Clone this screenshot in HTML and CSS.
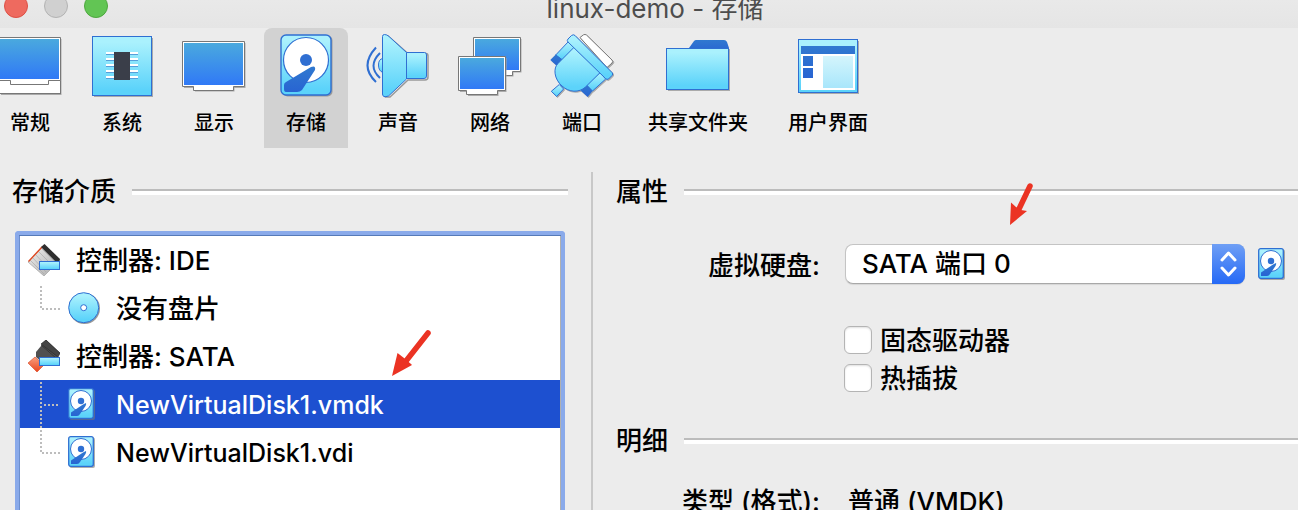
FILE: index.html
```html
<!DOCTYPE html>
<html lang="zh-CN">
<head>
<meta charset="utf-8">
<title>linux-demo - 存储</title>
<link rel="stylesheet" href="styles.css">
</head>
<body>
<svg class="defs" aria-hidden="true">
  <defs>
    <linearGradient id="cyan" x1="0" y1="0" x2="0" y2="1"><stop offset="0.1" stop-color="#aaf1fd"/><stop offset="0.9" stop-color="#5cd3fa"/></linearGradient>
    <linearGradient id="screen" x1="0" y1="0" x2="0" y2="1"><stop offset="0" stop-color="#4aa9de"/><stop offset="1" stop-color="#3079f6"/></linearGradient>
    <linearGradient id="navy" x1="0" y1="0" x2="0" y2="1"><stop offset="0" stop-color="#3079d0"/><stop offset="1" stop-color="#2864d2"/></linearGradient>
    <linearGradient id="pane" x1="0" y1="0" x2="0" y2="1"><stop offset="0" stop-color="#d4f5fc"/><stop offset="1" stop-color="#a8e6fb"/></linearGradient>
    <linearGradient id="board" x1="0" y1="0" x2="1" y2="1"><stop offset="0" stop-color="#f4f4f4"/><stop offset="1" stop-color="#a8a8a8"/></linearGradient>
    <linearGradient id="orange" x1="0" y1="0" x2="0" y2="1"><stop offset="0" stop-color="#f8a080"/><stop offset="1" stop-color="#e8431c"/></linearGradient>
    <symbol id="disk" viewBox="0 0 54 64">
      <rect x="2.500" y="1.500" width="50" height="61" rx="5" fill="#999"/>
      <rect x="1" y="1" width="50" height="60" rx="5" fill="url(#cyan)" stroke="#2f6fd2" stroke-width="1.400"/>
      <circle cx="26" cy="26" r="22.500" fill="#fff" stroke="#2f6fd2" stroke-width="1.200"/>
      <circle cx="26" cy="26" r="6" fill="#2f6fd2"/>
      <path d="M31 33Q36 31 35 36L22 56Q20 58 17 58H6Q4 58 4 55V51Q4 49 6 48Z" fill="url(#navy)"/>
    </symbol>
    <symbol id="disk-small" viewBox="0 0 27 32">
      <rect x="1.500" y="1.500" width="25.500" height="30.500" rx="2" fill="#777" opacity=".6"/>
      <rect x=".7" y=".7" width="24.600" height="29.600" rx="2" fill="url(#cyan)" stroke="#2f6fd2" stroke-width="1.300"/>
      <circle cx="13" cy="13" r="10.500" fill="#fff" stroke="#2f6fd2"/>
      <circle cx="13" cy="13" r="3.200" fill="#2f6fd2"/>
      <path d="M15 16.500L18 15Q18.500 16 17.500 18L12 26Q11 28 9 28H3V24.500Z" fill="url(#navy)"/>
    </symbol>
  </defs>
</svg>

<div class="window">
  <header class="titlebar">
    <div class="lights">
      <button class="light close" aria-label="关闭"></button>
      <button class="light minimize" aria-label="最小化"></button>
      <button class="light zoom" aria-label="缩放"></button>
    </div>
    <h1 class="title">linux-demo - 存储</h1>
  </header>

  <nav class="toolbar">
    <button class="tool">
      <svg class="tool-icon" viewBox="0 0 64 64"><path d="M3 5H63.500V61H3Z" fill="#aaa"/><rect x=".5" y="46.500" width="62" height="13" fill="#fff" stroke="#777"/><path d="M.5 3.500H62.500V46.500H50.500V50.500H12.500V46.500H.5Z" fill="#fff" stroke="#777"/><rect x="2" y="5" width="59" height="40" fill="url(#screen)"/></svg>
      <span>常规</span>
    </button>
    <button class="tool">
      <svg class="tool-icon" viewBox="0 0 64 64"><path d="M4 4H63V63H4Z" fill="#aaa"/><rect x="2.500" y="2.500" width="59" height="59" fill="url(#cyan)" stroke="#2f6fd2"/><path d="M16 20.500H48M16 26.500H48M16 32.500H48M16 38.500H48M16 44.500H48" stroke="#569fda"/><path d="M16 19H48M16 25H48M16 31H48M16 37H48M16 43H48" stroke="#fff" stroke-width="2"/><rect x="24" y="18" width="16" height="28" fill="#3a3e49"/></svg>
      <span>系统</span>
    </button>
    <button class="tool">
      <svg class="tool-icon" viewBox="0 0 64 64"><path d="M2 9H63.500V54H52.500V57.500H13V54H2Z" fill="#aaa"/><path d="M.5 7.500H62.500V52.500H51.500V56.500H11.500V52.500H.5Z" fill="#fff" stroke="#777"/><rect x="2" y="9" width="59" height="42" fill="url(#screen)"/></svg>
      <span>显示</span>
    </button>
    <button class="tool selected" aria-current="page">
      <svg class="tool-icon" viewBox="0 0 64 64"><use href="#disk" x="6" y="0" width="54" height="64"/></svg>
      <span>存储</span>
    </button>
    <button class="tool">
      <svg class="tool-icon" viewBox="0 0 64 64"><g fill="none" stroke="#999" stroke-width="1.500" transform="translate(1 1)"><path d="M18.500 1H21L41 18.500H59Q61 18.500 61 21V42Q61 45 58 45H41L23 62H18.500Z"/></g><path d="M10 13.500Q-7 32 10 48M14 19Q1 32 14 44" fill="none" stroke="#2f6fd2" stroke-width="2"/><path d="M17 24.500Q12.500 25 12.500 31T17 38.500Z" fill="url(#cyan)" stroke="#2f6fd2"/><path d="M40.500 18.500H58.500Q60.500 18.500 60.500 21V42Q60.500 44.500 58 44.500H40.500Z" fill="url(#cyan)" stroke="#2f6fd2"/><path d="M16.500 2.500Q16.500.5 18.500.5Q21 .5 23 2.500L40.500 18.500V45L22.500 62Q16.500 64 16.500 60Z" fill="url(#cyan)" stroke="#2f6fd2"/></svg>
      <span>声音</span>
    </button>
    <button class="tool">
      <svg class="tool-icon" viewBox="0 0 64 64"><path d="M17 5H63.500V38.500H55.500V42.500H17Z" fill="#aaa"/><path d="M15.500 3.500H62.500V37.500H54.500V41.500H15.500Z" fill="#fff" stroke="#777"/><rect x="17" y="5" width="44" height="31" fill="url(#screen)"/><path d="M2 24H48.500V58H40.500V62H10V58H2Z" fill="#aaa"/><path d="M.5 22.500H47.500V56.500H39.500V60.500H8.500V56.500H.5Z" fill="#fff" stroke="#777"/><rect x="2" y="24" width="44" height="31" fill="url(#screen)"/></svg>
      <span>网络</span>
    </button>
    <button class="tool">
      <svg class="tool-icon shaded" viewBox="0 0 64 64"><g stroke-linejoin="round"><path d="M30 3.500L33.500 .8Q35 0 36.500 1L62 26Q63.500 27.500 62 29L57 33.500Z" fill="#fff" stroke="#777"/><path d="M9.300 50.500L13.600 55L6.700 62.500L1.300 57.300Z" fill="url(#cyan)" stroke="#2f6fd2"/><path d="M19 7L25 13L12.500 26L5.700 21Z" fill="url(#cyan)" stroke="#2f6fd2"/><path d="M5.700 20.500L12.300 25.500L6.700 31.700L.3 26Z" fill="url(#navy)"/><path d="M50 38.500L55.700 45L42.500 57L36.500 51Z" fill="url(#cyan)" stroke="#2f6fd2"/><path d="M36.500 50.500L42.500 57L37.700 63L30.700 56.700Z" fill="url(#navy)"/><path d="M24 13.300L50 38.700L35.500 53C29 59 19 58.500 12 52C4 45 3 34 8 29.500Z" fill="url(#cyan)" stroke="#2f6fd2"/><path d="M21.500 1.500Q23.500 0 25 1.500L62 38.500Q63.500 40 62 41.500L58.500 45Q57 46 55.500 44.500L18 8Q16.500 6.500 18 5Z" fill="url(#cyan)" stroke="#2f6fd2"/></g></svg>
      <span>端口</span>
    </button>
    <button class="tool">
      <svg class="tool-icon" viewBox="0 0 64 64"><path d="M2 15H64V57H2Z" fill="#aaa"/><path d="M23 14L28 7Q29 6 30 6H58Q60 6 61 8L63 14V18H23Z" fill="url(#navy)"/><rect x=".5" y="14.500" width="62" height="41" fill="url(#cyan)" stroke="#2f6fd2"/></svg>
      <span>共享文件夹</span>
    </button>
    <button class="tool">
      <svg class="tool-icon" viewBox="0 0 64 64"><path d="M4 7H63V60H4Z" fill="#aaa"/><rect x="2.500" y="5.500" width="59" height="53" fill="url(#cyan)" stroke="#2f6fd2"/><path d="M5 20H59V56H5Z" fill="#fff"/><path d="M5 12H59V20H5ZM7 22H17V32H7ZM7 34H17V44H7Z" fill="url(#navy)"/><rect x="27" y="22" width="30" height="32" fill="url(#pane)"/></svg>
      <span>用户界面</span>
    </button>
  </nav>

  <main class="content">
    <section class="media">
      <h2 class="heading">存储介质</h2>
      <ul class="tree">
        <li class="row">
          <svg class="row-icon" viewBox="0 0 32 32"><path d="M15 2L31 17L16 32L0 18Z" fill="url(#board)" stroke="#999" stroke-width=".6"/><path d="M13 4L27 18M10 7L24 21M7 10L21 25M4 13L18 28M2 16L16 30" stroke="#a5a5a5" stroke-width=".6"/><path d="M14 3L.5 17.500" stroke="#e04a23" stroke-width="1.400"/><path d="M13 3L16.500 0L32 15L31 19L28 18Z" fill="#2e2e2e"/><rect x="11.500" y="17.500" width="20" height="8" fill="url(#cyan)" stroke="#2f6fd2"/></svg>
          <span>控制器: IDE</span>
        </li>
        <li class="row child">
          <svg class="branch" viewBox="0 0 48 48"><path d="M21 2V24M22 25H40"/></svg>
          <svg class="row-icon" viewBox="0 0 32 32"><circle cx="16.500" cy="16.500" r="15.500" fill="#999"/><circle cx="15.700" cy="15.700" r="15" fill="url(#cyan)" stroke="#2f6fd2"/><circle cx="15.700" cy="15.700" r="3" fill="#fff" stroke="#2f6fd2"/></svg>
          <span>没有盘片</span>
        </li>
        <li class="row">
          <svg class="row-icon" viewBox="0 0 32 32"><path d="M7 17L16 25L9 32L0 23Z" fill="url(#orange)" stroke="#d9431c" stroke-width=".6"/><path d="M18 0L32 13L27 20L15 23L8 17V12Z" fill="#505050"/><path d="M18 0L32 13L30 17L13 4ZM13 5L28 18" fill="#444" stroke="#2a2a2a" stroke-width=".7"/><rect x="11.500" y="17.500" width="20" height="8" fill="url(#cyan)" stroke="#2f6fd2"/></svg>
          <span>控制器: SATA</span>
        </li>
        <li class="row child active">
          <svg class="branch" viewBox="0 0 48 48"><path d="M21 2V48M24 25H40"/></svg>
          <svg class="row-icon" viewBox="0 0 32 32"><use href="#disk-small" width="27" height="32"/></svg>
          <span class="file">NewVirtualDisk1.vmdk</span>
        </li>
        <li class="row child">
          <svg class="branch" viewBox="0 0 48 48"><path d="M21 2V24M22 25H40"/></svg>
          <svg class="row-icon" viewBox="0 0 32 32"><use href="#disk-small" width="27" height="32"/></svg>
          <span class="file">NewVirtualDisk1.vdi</span>
        </li>
      </ul>
      <svg class="arrow arrow-media" viewBox="0 0 40 48" aria-hidden="true"><path d="M37 4L15 32" stroke="#eb3323" stroke-width="5.500" stroke-linecap="round"/><path d="M1 47L6.500 24L13 29L20 35L21 36Z" fill="#eb3323"/></svg>
    </section>

    <div class="divider"></div>

    <section class="details">
      <h2 class="heading">属性</h2>
      <form class="form">
        <label class="label" for="port">虚拟硬盘:</label>
        <div class="field">
          <div class="select">
            <select id="port"><option>SATA 端口 0</option></select>
            <svg class="stepper" viewBox="0 0 33 40" aria-hidden="true"><path d="M10 16L16.500 9L23 16M10 24L16.500 31L23 24"/></svg>
          </div>
          <button class="pick" type="button" aria-label="选择虚拟硬盘"><svg class="pick-icon" viewBox="0 0 27 32"><use href="#disk-small" width="27" height="32"/></svg></button>
        </div>
        <div class="checks">
          <label class="check"><input type="checkbox"><span>固态驱动器</span></label>
          <label class="check"><input type="checkbox"><span>热插拔</span></label>
        </div>
      </form>
      <h2 class="heading">明细</h2>
      <dl class="facts">
        <dt>类型 (格式):</dt>
        <dd>普通 (VMDK)</dd>
      </dl>
      <svg class="arrow arrow-port" viewBox="0 0 24 44" aria-hidden="true"><path d="M21 4L10 27" stroke="#eb3323" stroke-width="5.500" stroke-linecap="round"/><path d="M1 43L2 20.500L7 25L12 28L18 29Z" fill="#eb3323"/></svg>
    </section>
  </main>
</div>
</body>
</html>
```

FILE: styles.css
```css
* { box-sizing: border-box; }

body {
  margin: 0;
  overflow: hidden;
  background: #ececec;
  color: #000;
  font: 500 26px/38px Inter, "Noto Sans CJK SC", sans-serif;
}

button { padding: 0; border: 0; background: none; color: inherit; font: inherit; }
h1, h2, ul, dl, dd { margin: 0; padding: 0; font-size: inherit; font-weight: inherit; list-style: none; }
svg { display: block; flex: none; }

.defs { position: absolute; width: 0; height: 0; }
.window { display: flex; flex-direction: column; height: 100vh; }

.titlebar {
  display: grid;
  grid-template-columns: 1fr auto 1fr;
  grid-template-rows: 28px;
  align-items: end;
  flex: none;
  height: 28px;
  padding-left: 12px;
  overflow: hidden;
  background: linear-gradient(#e9e9e9, #e5e5e5);
}
.lights { display: flex; gap: 16px; margin-left: -8px; padding-bottom: 10px; }
.light { width: 24px; height: 24px; border: 1px solid; border-radius: 50%; }
.close { background: #ee6a5f; border-color: #dd4f45; }
.minimize { background: #d0d0d0; border-color: #b3b3b3; }
.zoom { background: #62c554; border-color: #4da73e; }
.title { color: #4d4d4d; font-weight: 400; }

.toolbar { display: flex; flex: none; gap: 8px; margin-left: -12px; font-size: 20px; line-height: 30px; }
.tool {
  display: flex;
  flex-direction: column;
  flex: none;
  align-items: center;
  gap: 10px;
  min-width: 84px;
  padding: 6px 16px 10px;
}
.tool.selected { background: #d2d2d2; border-radius: 8px 8px 0 0; }
.tool-icon { width: 64px; height: 64px; margin: 0 -10px; }
.shaded { filter: drop-shadow(1px 1px 0 #aaa); }

.content {
  display: grid;
  grid-template-columns: minmax(0, 556fr) 2px minmax(0, 682fr);
  flex: 1;
  gap: 23px;
  min-height: 0;
  padding: 24px 0 0 12px;
}
.divider { background: #c8c8c8; }
.media, .details { position: relative; display: flex; flex-direction: column; }

.heading { display: flex; align-items: center; gap: 16px; line-height: 40px; }
.heading::after { flex: 1; height: 4px; border-top: 2px solid #bcbcbc; background: linear-gradient(#fff, #fff); content: ""; }

.tree {
  flex: 1;
  margin: 19px 3px 0;
  border: 4px solid #8aaaea;
  border-bottom: 0;
  border-radius: 4px 4px 0 0;
  background: #fff;
  box-shadow: inset 0 1px #567ab8, inset 1px 0 #6d8fce, inset -1px 0 #b0b0b0;
  padding: 1px 1px 0;
}
.row { display: flex; align-items: center; gap: 16px; height: 48px; padding-left: 8px; white-space: nowrap; }
.row span { padding-top: 2px; }
.row .file { font-size: 25px; }
.child { padding-left: 0; }
.active { background: #1d50d0; color: #fff; }
.row-icon { width: 32px; height: 32px; }
.branch { width: 48px; height: 48px; margin-right: -16px; fill: none; stroke: #bdbdbd; stroke-width: 2; stroke-dasharray: 2; }

.form, .facts { display: grid; grid-template-columns: 204px minmax(0, 1fr); }
.form { margin: 32px 13px 29px 0; column-gap: 24px; row-gap: 38px; }
.label, .facts dt { text-align: right; }
.label { line-height: 44px; }
.field { display: flex; align-items: center; gap: 13px; height: 40px; padding-left: 1px; }
.select { position: relative; flex: 1; height: 40px; }
.select select {
  appearance: none;
  width: 100%;
  height: 40px;
  padding: 0 40px 2px 16px;
  border: 1px solid #c4c4c4;
  border-bottom-color: #a8a8a8;
  border-radius: 8px;
  background: #fff;
  box-shadow: 0 1px 1px #00000018;
  color: #000;
  font: inherit;
}
.stepper {
  position: absolute;
  top: 0;
  right: 0;
  width: 33px;
  height: 40px;
  border-radius: 0 8px 8px 0;
  background: linear-gradient(#6f9ff5, #2569f6);
  fill: none;
  stroke: #fff;
  stroke-width: 3;
  stroke-linecap: round;
  stroke-linejoin: round;
  pointer-events: none;
}
.pick-icon { width: 27px; height: 32px; }
.checks { display: grid; grid-column: 2; gap: 10px; }
.check { display: flex; align-items: center; gap: 8px; height: 28px; }
.check span { padding-top: 2px; }
.check input {
  appearance: none;
  width: 28px;
  height: 28px;
  margin: 0;
  border: 1px solid #b4b4b4;
  border-radius: 6px;
  background: #fff;
  box-shadow: inset 0 1px 2px #00000020;
}
.facts { margin-top: 22px; column-gap: 28px; }

.arrow { position: absolute; fill: none; }
.arrow-media { top: 157px; left: 379px; width: 40px; height: 48px; }
.arrow-port { top: 10px; left: 393px; width: 24px; height: 44px; }
```
